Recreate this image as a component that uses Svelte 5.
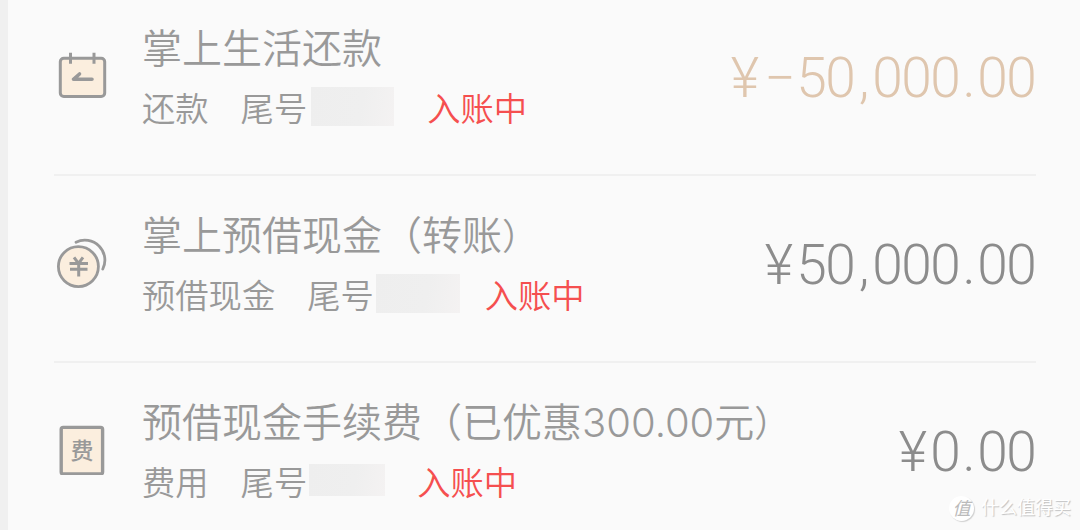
<script lang="ts">
	type Bill = {
		icon: 'calendar' | 'coins' | 'fee';
		title: string;
		note?: string;
		kind: string;
		mask: string;
		amount: string;
		income?: boolean;
	};

	const bills: Bill[] = [
		{ icon: 'calendar', title: '掌上生活还款', kind: '还款', mask: 'first', amount: '¥−50,000.00', income: true },
		{ icon: 'coins', title: '掌上预借现金', note: '转账', kind: '预借现金', mask: 'second', amount: '¥50,000.00' },
		{ icon: 'fee', title: '预借现金手续费', note: '已优惠300.00元', kind: '费用', mask: 'third', amount: '¥0.00' }
	];

	function charClass(c: string) {
		if (c === '¥') return 'yen';
		if (c === '−') return 'minus';
		if (c === ',') return 'comma';
		if (c === '.') return 'dot';
		return 'digit';
	}
</script>

<main class="screen">
	<ul class="bills">
		{#each bills as bill}
			<li class="bill">
				<div class="icon">
					{#if bill.icon === 'calendar'}
						<svg width="56" height="56" viewBox="0 0 56 56" fill="none" stroke="#999" stroke-width="3">
							<rect x="6.3" y="13.3" width="44.4" height="38.2" rx="3.5" fill="#fbeede" />
							<path d="M16.5 7.8v11M40 7.8v11" />
							<path d="M38 34.3H19.5l6-5.3" stroke-width="3.6" stroke-linecap="round" stroke-linejoin="round" />
						</svg>
					{:else if bill.icon === 'coins'}
						<svg width="56" height="56" viewBox="0 0 56 56" fill="none" stroke="#999" stroke-width="2.8">
							<path d="M22 10.2A20 20 0 0 1 48.8 37" stroke-linecap="round" />
							<circle cx="24.4" cy="34.6" r="20" fill="#fbeede" />
							<path d="M20 25.4l4.5 6 4.5-6M15.5 31.6h18.5M16 37.2h17.5M24.7 32v12.5" stroke-width="3" />
						</svg>
					{:else}
						<svg width="56" height="56" viewBox="0 0 56 56">
							<rect x="7.2" y="8.4" width="41.4" height="46.6" rx="2" fill="#fbeede" stroke="#999" stroke-width="3.4" />
							<text x="28" y="39.8" text-anchor="middle">费</text>
						</svg>
					{/if}
				</div>
				<div class="info">
					<div class="title">
						{bill.title}{#if bill.note}（{bill.note}<span class="close">）</span>{/if}
					</div>
					<div class="meta">
						<span class="kind">{bill.kind}</span>
						<span>尾号</span>
						<span class="mask {bill.mask}"></span>
						<span class="status">入账中</span>
					</div>
				</div>
				<div class="amount" class:income={bill.income}>
					{#each bill.amount as c}<span class={charClass(c)}>{c}</span>{/each}
				</div>
			</li>
		{/each}
	</ul>
	<div class="watermark">
		<span class="badge">值</span>
		<span>什么值得买</span>
	</div>
</main>

<style>
	.screen {
		position: relative;
		box-sizing: border-box;
		width: 1080px;
		height: 530px;
		overflow: hidden;
		background: #fafafa;
		border-left: 8px solid #f0f0f0;
		font-family: Inter, 'Noto Sans CJK SC', sans-serif;
		font-weight: 350;
		color: #999;
	}

	/* the list is scrolled slightly past its first row */
	.bills {
		list-style: none;
		margin: -11px 44px 0 46px;
		padding: 0;
	}

	.bill {
		display: flex;
		box-sizing: border-box;
		height: 187px;
		border-bottom: 2px solid #f0f0f0;
	}

	.bill:last-child {
		border-bottom: none;
	}

	.icon {
		width: 88px;
		padding-top: 56px;
		flex: none;
	}

	.icon svg {
		display: block;
	}

	.icon text {
		font-size: 23px;
		font-weight: 500;
		fill: #999;
	}

	.info {
		flex: 1;
		padding-top: 35px;
		white-space: nowrap;
	}

	.title {
		font-size: 40px;
		line-height: 50px;
	}

	.close {
		font-size: 36px;
		line-height: 1;
	}

	.meta {
		display: flex;
		align-items: center;
		margin-top: 10px;
		font-size: 33.3px;
		line-height: 50px;
	}

	.kind {
		margin-right: 32px;
	}

	.mask {
		height: 39px;
		margin-top: -6px;
		background: linear-gradient(100deg, #eeeeee, #efefef 60%, #f4f2f2);
	}

	.mask.first {
		width: 83px;
		margin-left: 4px;
		margin-right: 33px;
	}

	.mask.second {
		width: 84px;
		margin-left: 2px;
		margin-right: 25px;
	}

	.mask.third {
		width: 76px;
		height: 32px;
		margin-left: 2px;
		margin-right: 32px;
	}

	.status {
		color: #f54f4f;
	}

	.amount {
		display: flex;
		padding-top: 56px;
		font-family: Roboto, sans-serif;
		font-size: 55px;
		font-weight: 350;
		line-height: 66px;
		color: #8c8c8c;
	}

	.amount span {
		display: flex;
		justify-content: center;
	}

	.amount.income {
		color: #dfc6ae;
	}

	.digit {
		width: 29px;
	}

	.yen {
		width: 36px;
	}

	.minus {
		width: 34px;
	}

	.comma,
	.dot {
		width: 18px;
	}

	.watermark {
		position: absolute;
		right: 9px;
		bottom: 9px;
		display: flex;
		align-items: center;
		gap: 7px;
		font-size: 18px;
		font-weight: 400;
		line-height: 26px;
		color: #fff;
		text-shadow: 1px 1px 1px #c0c0c0;
	}

	.badge {
		width: 25px;
		height: 25px;
		border-radius: 50%;
		background: #fff;
		box-shadow: 1px 1px 1px #d0d0d0;
		color: #bbb;
		text-align: center;
		text-shadow: none;
		line-height: 25px;
		font-style: italic;
	}
</style>
